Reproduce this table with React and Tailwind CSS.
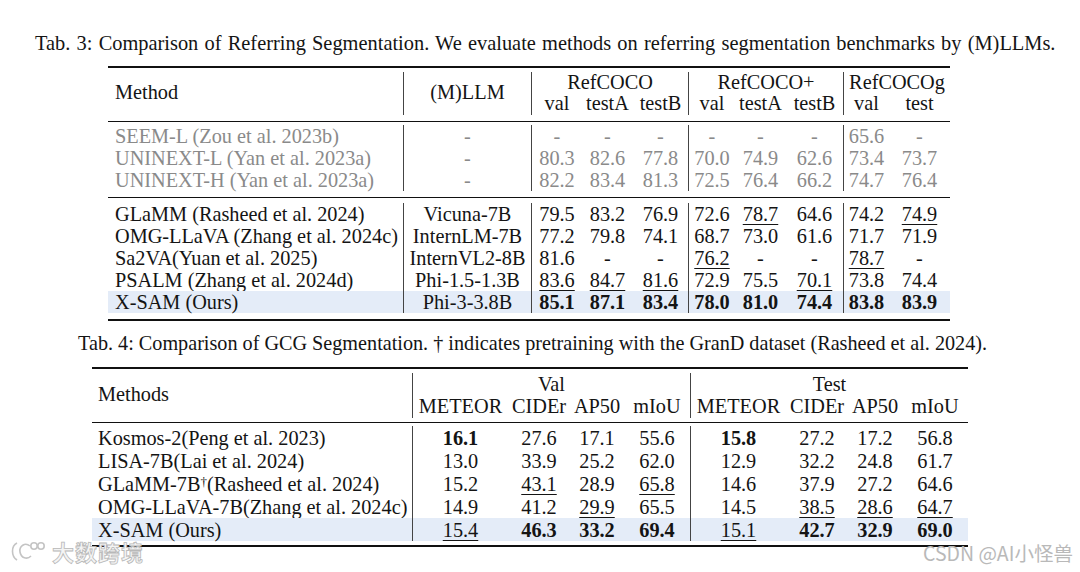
import React from 'react';

const t1Cols = 'grid-cols-[295px_128px_51px_51px_55px_47px_51px_57px_46px_61px]';
const t2Cols = 'grid-cols-[320px_96px_62px_54px_66px_96px_62px_54px_66px]';

const grayRows = [
  ['SEEM-L (Zou et al. 2023b)', '-', '-', '-', '-', '-', '-', '-', '65.6', '-'],
  ['UNINEXT-L (Yan et al. 2023a)', '-', '80.3', '82.6', '77.8', '70.0', '74.9', '62.6', '73.4', '73.7'],
  ['UNINEXT-H (Yan et al. 2023a)', '-', '82.2', '83.4', '81.3', '72.5', '76.4', '66.2', '74.7', '76.4'],
];

const mainRows = [
  ['GLaMM (Rasheed et al. 2024)', 'Vicuna-7B', '79.5', '83.2', '76.9', '72.6', 'u:78.7', '64.6', '74.2', 'u:74.9'],
  ['OMG-LLaVA (Zhang et al. 2024c)', 'InternLM-7B', '77.2', '79.8', '74.1', '68.7', '73.0', '61.6', '71.7', '71.9'],
  ['Sa2VA(Yuan et al. 2025)', 'InternVL2-8B', '81.6', '-', '-', 'u:76.2', '-', '-', 'u:78.7', '-'],
  ['PSALM (Zhang et al. 2024d)', 'Phi-1.5-1.3B', 'u:83.6', 'u:84.7', 'u:81.6', '72.9', '75.5', 'u:70.1', '73.8', '74.4'],
  ['X-SAM (Ours)', 'Phi-3-3.8B', 'b:85.1', 'b:87.1', 'b:83.4', 'b:78.0', 'b:81.0', 'b:74.4', 'b:83.8', 'b:83.9'],
];

const gcgRows = [
  ['Kosmos-2(Peng et al. 2023)', 'b:16.1', '27.6', '17.1', '55.6', 'b:15.8', '27.2', '17.2', '56.8'],
  ['LISA-7B(Lai et al. 2024)', '13.0', '33.9', '25.2', '62.0', '12.9', '32.2', '24.8', '61.7'],
  ['GLaMM-7B†(Rasheed et al. 2024)', '15.2', 'u:43.1', '28.9', 'u:65.8', '14.6', '37.9', '27.2', '64.6'],
  ['OMG-LLaVA-7B(Zhang et al. 2024c)', '14.9', '41.2', 'u:29.9', '65.5', '14.5', 'u:38.5', 'u:28.6', 'u:64.7'],
  ['X-SAM (Ours)', 'u:15.4', 'b:46.3', 'b:33.2', 'b:69.4', 'u:15.1', 'b:42.7', 'b:32.9', 'b:69.0'],
];

const Val = ({ v }) => {
  if (v.startsWith('b:')) return <span className="font-bold">{v.slice(2)}</span>;
  if (v.startsWith('u:'))
    return <span className="underline decoration-1 underline-offset-[3px]">{v.slice(2)}</span>;
  return <span>{v}</span>;
};

const MethodName = ({ name }) => {
  if (!name.includes('†')) return name;
  const [a, b] = name.split('†');
  return (
    <>
      {a}
      <sup className="text-[13px] relative -top-[2px]">†</sup>
      {b}
    </>
  );
};

const T1Row = ({ row, hl }) => {
  const lines = [1, 2, 5, 8];
  return row.map((v, i) => (
    <div
      key={i}
      className={`flex items-center ${i === 0 ? 'pl-[7px]' : 'justify-center'} ${lines.includes(i) ? 'border-l border-[#444]' : ''} ${hl ? 'bg-[#e4ecf8]' : ''}`}
    >
      {i === 0 ? v : <Val v={v} />}
    </div>
  ));
};

const T2Row = ({ row, hl }) => {
  const lines = [1, 5];
  return row.map((v, i) => (
    <div
      key={i}
      className={`flex items-center ${i === 0 ? 'pl-[6px]' : 'justify-center'} ${lines.includes(i) ? 'border-l border-[#444]' : ''} ${hl ? 'bg-[#e4ecf8]' : ''}`}
    >
      {i === 0 ? <MethodName name={v} /> : <Val v={v} />}
    </div>
  ));
};

const LogoMark = () => (
  <svg width="40" height="24" viewBox="0 0 40 24" fill="none" stroke="#c4c4c4" strokeWidth="1.6">
    <path d="M9 4 C3 7 3 17 9 21" />
    <path d="M22 7 C17 3 11 7 12 13 C13 19 19 21 23 17" />
    <circle cx="26" cy="7" r="3.2" />
    <circle cx="33" cy="7" r="3.2" />
  </svg>
);

export default function App() {
  return (
    <div className="relative w-[1080px] h-[572px] bg-white overflow-hidden text-[#141414] font-['Liberation_Serif','Times_New_Roman',serif] text-[20.3px]">
      <div className="flex flex-col items-start">
        <p className="mt-[32px] ml-[35px] leading-[22px] whitespace-nowrap text-[20.4px] [word-spacing:1.1px]">
          Tab. 3: Comparison of Referring Segmentation. We evaluate methods on referring segmentation benchmarks by (M)LLMs.
        </p>

        <div className="mt-[12px] ml-[108px] w-[842px] flex flex-col leading-[22px]">
          <div className="h-[2px] bg-[#111]" />
          <div className={`grid ${t1Cols} grid-rows-[19px_24px] mt-[4px] mb-[6px]`}>
            <div className="row-span-2 flex items-center pl-[7px] pb-[3px]">Method</div>
            <div className="row-span-2 flex items-center justify-center border-l border-[#444] pb-[3px]">(M)LLM</div>
            <div className="col-span-3 flex items-center justify-center border-l border-[#444]">RefCOCO</div>
            <div className="col-span-3 flex items-center justify-center border-l border-[#444]">RefCOCO+</div>
            <div className="col-span-2 flex items-center justify-center border-l border-[#444]">RefCOCOg</div>
            <div className="flex items-center justify-center border-l border-[#444]">val</div>
            <div className="flex items-center justify-center">testA</div>
            <div className="flex items-center justify-center">testB</div>
            <div className="flex items-center justify-center border-l border-[#444]">val</div>
            <div className="flex items-center justify-center">testA</div>
            <div className="flex items-center justify-center">testB</div>
            <div className="flex items-center justify-center border-l border-[#444]">val</div>
            <div className="flex items-center justify-center">test</div>
          </div>
          <div className="h-px bg-[#111]" />
          <div className={`grid ${t1Cols} auto-rows-[22px] mt-[3px] mb-[6px] text-[#8a8a8a]`}>
            {grayRows.map((r, i) => (
              <T1Row key={i} row={r} />
            ))}
          </div>
          <div className="h-px bg-[#111]" />
          <div className={`grid ${t1Cols} auto-rows-[22px] mt-[5px] mb-[6px]`}>
            {mainRows.map((r, i) => (
              <T1Row key={i} row={r} hl={i === mainRows.length - 1} />
            ))}
          </div>
          <div className="h-[2px] bg-[#111]" />
        </div>

        <p className="mt-[11px] ml-[78px] leading-[22px] whitespace-nowrap text-[20.2px]">
          Tab. 4: Comparison of GCG Segmentation. † indicates pretraining with the GranD dataset (Rasheed et al. 2024).
        </p>

        <div className="mt-[13px] ml-[92px] w-[876px] flex flex-col leading-[22px]">
          <div className="h-[2px] bg-[#111]" />
          <div className={`grid ${t2Cols} grid-rows-[21px_24px] mt-[4px] mb-[4px]`}>
            <div className="row-span-2 flex items-center pl-[6px] pb-[3px]">Methods</div>
            <div className="col-span-4 flex items-center justify-center border-l border-[#444]">Val</div>
            <div className="col-span-4 flex items-center justify-center border-l border-[#444]">Test</div>
            <div className="flex items-center justify-center border-l border-[#444]">METEOR</div>
            <div className="flex items-center justify-center">CIDEr</div>
            <div className="flex items-center justify-center">AP50</div>
            <div className="flex items-center justify-center">mIoU</div>
            <div className="flex items-center justify-center border-l border-[#444]">METEOR</div>
            <div className="flex items-center justify-center">CIDEr</div>
            <div className="flex items-center justify-center">AP50</div>
            <div className="flex items-center justify-center">mIoU</div>
          </div>
          <div className="h-px bg-[#111]" />
          <div className={`grid ${t2Cols} auto-rows-[23px] mt-[3px] mb-[4px]`}>
            {gcgRows.map((r, i) => (
              <T2Row key={i} row={r} hl={i === gcgRows.length - 1} />
            ))}
          </div>
          <div className="h-[2px] bg-[#111]" />
        </div>
      </div>

      <div className="absolute left-[8px] top-[539px] flex items-center gap-[4px]">
        <LogoMark />
        <span className="text-[22px] leading-none tracking-[1px] text-[#f4f4f4] font-['Noto_Sans_CJK_SC',sans-serif] font-bold [-webkit-text-stroke:0.8px_#b8b8b8]">
          大数跨境
        </span>
      </div>
      <div className="absolute left-[923px] top-[543px] text-[19.5px] leading-[19px] text-[#b9b9b9] font-['Noto_Sans_CJK_SC','Liberation_Sans',sans-serif]">
        CSDN @AI小怪兽
      </div>
    </div>
  );
}
